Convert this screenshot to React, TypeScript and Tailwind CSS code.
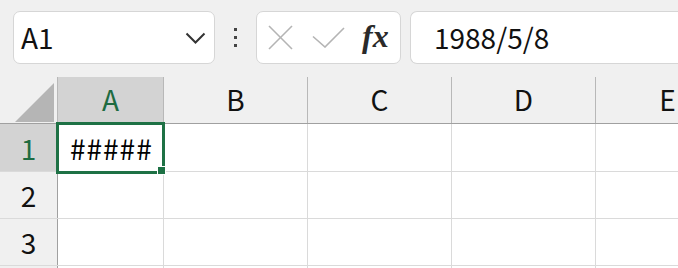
import React from "react";

const font = { fontFamily: '"Noto Sans CJK JP", "Noto Sans", sans-serif' };

function HeaderCell({ label, w, active }: { label: string; w: string; active?: boolean }) {
  return (
    <div
      className={`${w} shrink-0 h-full flex items-center justify-center border-r border-[#b8b8b8] text-[28px] leading-none ${
        active ? "bg-[#d3d3d3] text-[#1e6b41]" : "bg-[#f0f0f0] text-[#111]"
      }`}
    >
      <span className="pb-[2px]">{label}</span>
    </div>
  );
}

function Row({ n, h, active, first }: { n: string; h: string; active?: boolean; first?: boolean }) {
  return (
    <div className={`flex ${h} shrink-0 border-b border-[#dadada]`}>
      <div
        className={`w-[58px] shrink-0 h-full flex items-center justify-center border-r border-[#a0a0a0] text-[28px] leading-none ${
          active ? "bg-[#d3d3d3] text-[#1e6b41]" : "bg-[#f0f0f0] text-[#111]"
        }`}
      >
        <span>{n}</span>
      </div>
      <div className="w-[106px] shrink-0 h-full border-r border-[#dadada] bg-white flex items-center pl-[12px] text-[28px] leading-none text-black">
        {first ? <span className="tracking-[1px]">#####</span> : null}
      </div>
      <div className="w-[144px] shrink-0 h-full border-r border-[#dadada] bg-white" />
      <div className="w-[144px] shrink-0 h-full border-r border-[#dadada] bg-white" />
      <div className="w-[144px] shrink-0 h-full border-r border-[#dadada] bg-white" />
      <div className="flex-1 h-full bg-white" />
    </div>
  );
}

export default function App() {
  return (
    <div className="w-[678px] h-[268px] overflow-hidden bg-[#f0f0f0] relative" style={font}>
      {/* Toolbar */}
      <div className="h-[77px] flex items-start pt-[11px]">
        <div className="ml-[13px] w-[202px] h-[53px] shrink-0 bg-white border border-[#d6d6d6] rounded-[7px] flex items-center pl-[7px] pr-[8px]">
          <span className="text-[28px] leading-none text-[#111] pb-[1px]">A1</span>
          <div className="flex-1" />
          <svg width="21" height="12" viewBox="0 0 21 12">
            <polyline points="1.5,1.5 10.5,10.5 19.5,1.5" fill="none" stroke="#333" strokeWidth="2" />
          </svg>
        </div>
        <div className="ml-[19px] w-[3px] h-[53px] shrink-0 flex flex-col items-center justify-center gap-[5px]">
          <div className="w-[3px] h-[3px] bg-[#444]" />
          <div className="w-[3px] h-[3px] bg-[#444]" />
          <div className="w-[3px] h-[3px] bg-[#444]" />
        </div>
        <div className="ml-[19px] w-[145px] h-[53px] shrink-0 bg-white border border-[#d6d6d6] rounded-[7px] flex items-center pl-[11px]">
          <svg width="25" height="25" viewBox="0 0 25 25">
            <line x1="1" y1="1" x2="24" y2="24" stroke="#b4b4b4" strokeWidth="1.6" />
            <line x1="24" y1="1" x2="1" y2="24" stroke="#b4b4b4" strokeWidth="1.6" />
          </svg>
          <svg width="33" height="21" viewBox="0 0 33 21" className="ml-[19px]">
            <polyline points="1,9.5 13,20 32,1" fill="none" stroke="#b4b4b4" strokeWidth="1.6" />
          </svg>
          <span
            className="ml-[17px] italic font-bold text-[32px] leading-none text-[#2a2a2a] pb-[3px]"
            style={{ fontFamily: '"Liberation Serif", "DejaVu Serif", serif' }}
          >
            fx
          </span>
        </div>
        <div className="ml-[9px] flex-1 h-[53px] bg-white border border-r-0 border-[#d6d6d6] rounded-l-[7px] flex items-center pl-[23px]">
          <span className="text-[28px] leading-none text-[#111] pb-[1px]">1988/5/8</span>
        </div>
      </div>

      {/* Column headers */}
      <div className="flex h-[47px] border-b border-[#a0a0a0]">
        <div className="w-[58px] shrink-0 h-full border-r border-[#b8b8b8] bg-[#f0f0f0] flex items-end justify-end pr-[3px] pb-[1px]">
          <svg width="39" height="39" viewBox="0 0 39 39">
            <polygon points="39,0 39,39 0,39" fill="#b5b5b5" />
          </svg>
        </div>
        <HeaderCell label="A" w="w-[106px]" active />
        <HeaderCell label="B" w="w-[144px]" />
        <HeaderCell label="C" w="w-[144px]" />
        <HeaderCell label="D" w="w-[144px]" />
        <HeaderCell label="E" w="w-[144px]" />
      </div>

      {/* Rows */}
      <Row n="1" h="h-[48px]" active first />
      <Row n="2" h="h-[47px]" />
      <Row n="3" h="h-[47px]" />
      <Row n="" h="h-[47px]" />

      {/* Selection overlay */}
      <div className="absolute left-[56px] top-[122px] w-[109px] h-[52px] border-[3px] border-[#1e7145] pointer-events-none">
        <div className="absolute right-[-4px] bottom-[-4px] w-[9px] h-[9px] bg-[#1e7145] border border-white" />
      </div>
    </div>
  );
}
